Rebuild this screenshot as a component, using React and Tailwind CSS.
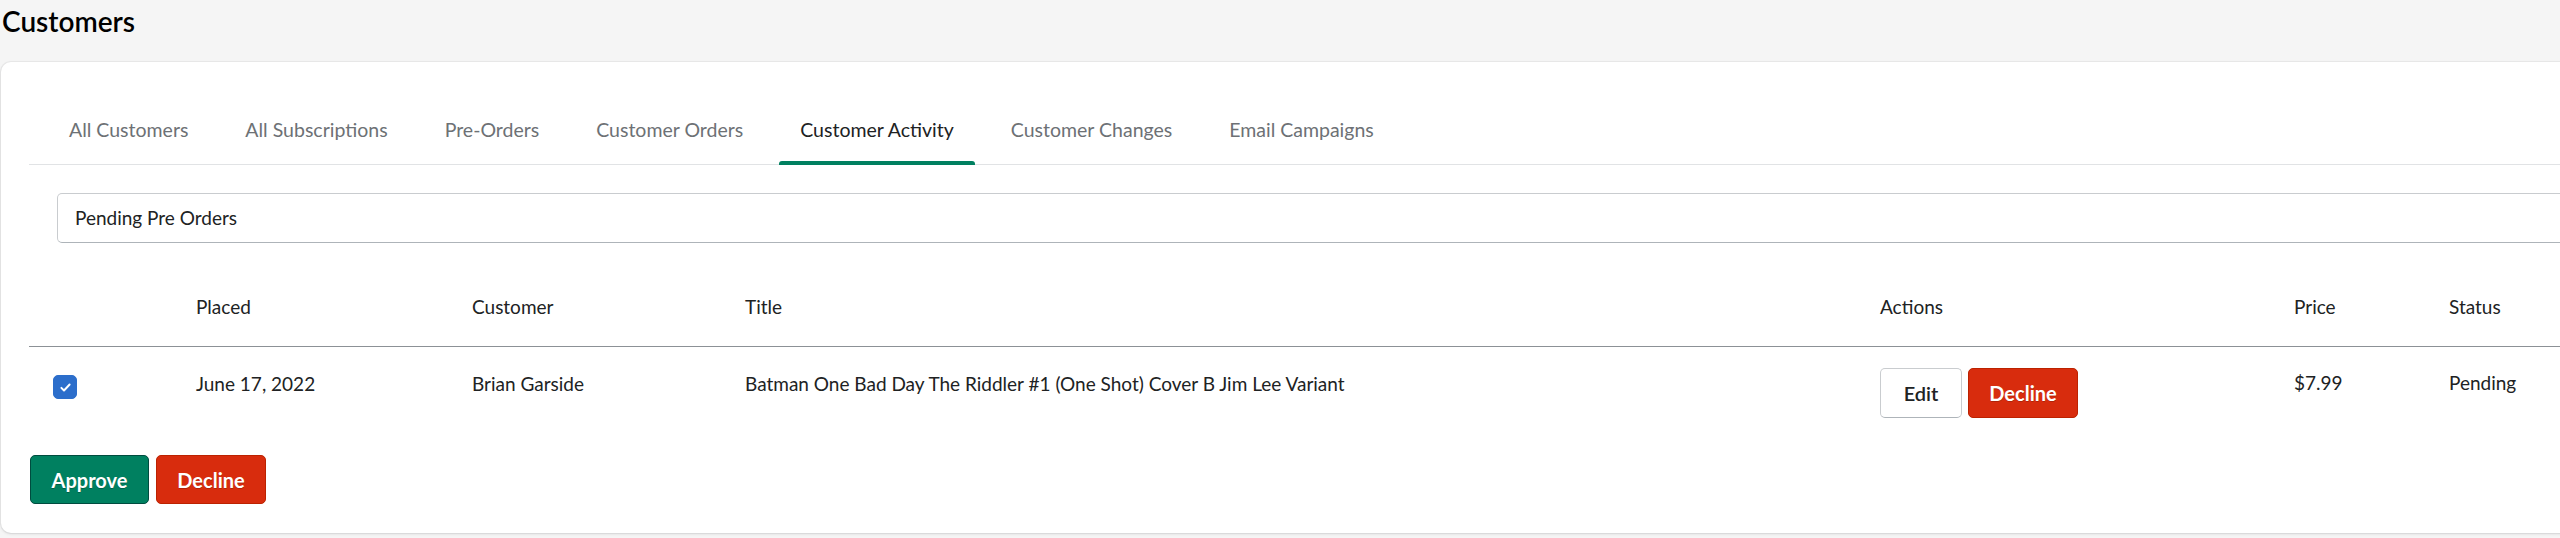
import { useState } from "react";

const TABS = [
  "All Customers",
  "All Subscriptions",
  "Pre-Orders",
  "Customer Orders",
  "Customer Activity",
  "Customer Changes",
  "Email Campaigns",
];

const COLS = "grid grid-cols-[146px_276px_273px_1135px_414px_155px_1fr]";

const rows = [
  {
    id: 1,
    placed: "June 17, 2022",
    customer: "Brian Garside",
    title: "Batman One Bad Day The Riddler #1 (One Shot) Cover B Jim Lee Variant",
    price: "$7.99",
    status: "Pending",
  },
];

function Checkbox({ checked, onChange }) {
  return (
    <button
      onClick={onChange}
      className={
        "flex h-[24px] w-[24px] items-center justify-center rounded-[5px] border " +
        (checked ? "border-[#2c6ecb] bg-[#2c6ecb]" : "border-[#8c9196] bg-white")
      }
    >
      {checked && (
        <svg viewBox="0 0 20 20" className="h-[15px] w-[15px]" fill="none">
          <path d="M4.5 10.5l3.5 3.5 7.5-8" stroke="white" strokeWidth="2.6" strokeLinecap="round" strokeLinejoin="round" />
        </svg>
      )}
    </button>
  );
}

export default function App() {
  const [active, setActive] = useState("Customer Activity");
  const [checked, setChecked] = useState({ 1: true });

  return (
    <div className="h-[538px] w-full overflow-hidden bg-[#f5f5f5] font-['Segoe_UI',Lato,'Liberation_Sans',sans-serif] text-[#202223]">
      {/* page title */}
      <div className="h-[62px] pl-[2px] pt-[4px]">
        <h1 className="text-[28px] font-semibold leading-[34px] text-black">Customers</h1>
      </div>

      {/* card runs past the right edge */}
      <div className="ml-[1px] w-[2640px] rounded-[10px] bg-white px-[28px] pb-[29px] pt-[27px] shadow-[0_0_0_1px_rgba(63,63,68,0.05),0_1px_3px_rgba(63,63,68,0.15)]">
        {/* tabs */}
        <div className="flex gap-[15px] border-b border-[#e1e3e5] pl-[19px]">
          {TABS.map((t) => {
            const on = t === active;
            return (
              <button
                key={t}
                onClick={() => setActive(t)}
                className="relative flex h-[75px] items-center px-[21px] pt-[6px] text-[19.5px] leading-[26px]"
              >
                <span className={on ? "text-[#202223]" : "text-[#6d7175]"}>{t}</span>
                {on && (
                  <span className="absolute bottom-[-1px] left-0 right-0 h-[4px] rounded-t-[3px] bg-[#008060]" />
                )}
              </button>
            );
          })}
        </div>

        {/* filter select */}
        <div className="px-[28px] pb-[25px] pt-[28px]">
          <div className="flex h-[50px] items-center rounded-[5px] border border-[#c9cccf] border-b-[#aeb4b9] px-[17px] text-[19px]">
            Pending Pre Orders
          </div>
        </div>

        {/* table */}
        <div className={COLS + " border-b border-[#8c9196] pb-[26px] pt-[26px] text-[19px] leading-[26px]"}>
          <div />
          <div className="pl-[21px]">Placed</div>
          <div className="pl-[21px]">Customer</div>
          <div className="pl-[21px]">Title</div>
          <div className="pl-[21px]">Actions</div>
          <div className="pl-[21px]">Price</div>
          <div className="pl-[21px]">Status</div>
        </div>

        {rows.map((r) => (
          <div key={r.id} className={COLS + " py-[21px] text-[19px] leading-[26px]"}>
            <div className="pl-[24px] pt-[7px]">
              <Checkbox
                checked={!!checked[r.id]}
                onChange={() => setChecked({ ...checked, [r.id]: !checked[r.id] })}
              />
            </div>
            <div className="pl-[21px] pt-[3px]">{r.placed}</div>
            <div className="pl-[21px] pt-[3px]">{r.customer}</div>
            <div className="pl-[21px] pt-[3px]">{r.title}</div>
            <div className="flex gap-[6px] pl-[21px]">
              <button className="h-[50px] w-[82px] rounded-[5px] border border-[#c9cccf] border-b-[#aeb4b9] bg-white text-[20px] font-semibold text-[#202223]">
                Edit
              </button>
              <button className="h-[50px] w-[110px] rounded-[5px] border border-[#bc2200] bg-[#d82c0d] text-[20px] font-bold text-white [text-shadow:0_1px_0_rgba(0,0,0,0.2)]">
                Decline
              </button>
            </div>
            <div className="pl-[21px] pt-[2px]">{r.price}</div>
            <div className="pl-[21px] pt-[2px]">{r.status}</div>
          </div>
        ))}

        {/* bulk actions */}
        <div className="mt-[16px] flex gap-[7px] pl-[1px]">
          <button className="h-[49px] w-[119px] rounded-[5px] border border-[#004c3f] bg-[#008060] text-[20px] font-bold text-white [text-shadow:0_1px_0_rgba(0,0,0,0.25)]">
            Approve
          </button>
          <button className="h-[49px] w-[110px] rounded-[5px] border border-[#bc2200] bg-[#d82c0d] text-[20px] font-bold text-white [text-shadow:0_1px_0_rgba(0,0,0,0.2)]">
            Decline
          </button>
        </div>
      </div>
    </div>
  );
}
